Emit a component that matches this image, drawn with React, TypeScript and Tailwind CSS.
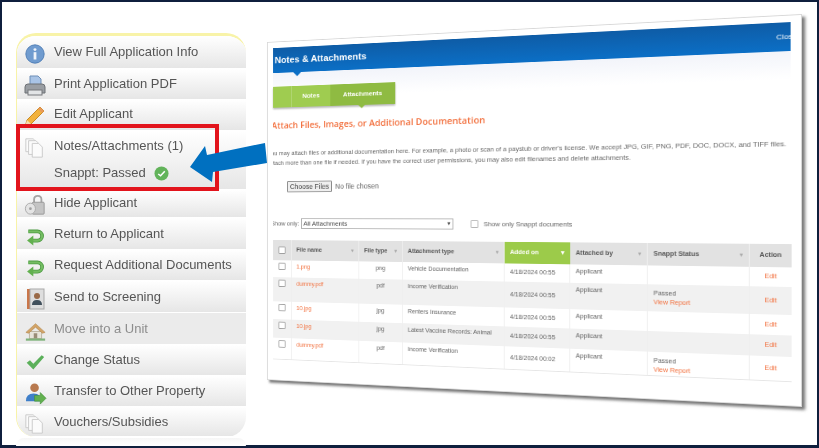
import React from "react";

const InfoIcon = () => (
  <svg viewBox="0 0 24 24" className="w-[22px] h-[22px]">
    <circle cx="12" cy="12" r="10" fill="#6f9bcf" stroke="#4f7db5" />
    <circle cx="12" cy="7.200" r="1.600" fill="#eef3fa" />
    <rect x="10.500" y="10" width="3" height="8" fill="#eef3fa" />
  </svg>
);

const PrintIcon = () => (
  <svg viewBox="0 0 24 24" className="w-[24px] h-[24px]">
    <path d="M7 2h8l3 3v7H7z" fill="#a9c4e6" stroke="#6f8fb8" />
    <path d="M2 13q0-3 3-3h14q3 0 3 3v6H2z" fill="#9a9ea3" stroke="#6d7075" />
    <rect x="5" y="16" width="14" height="5" fill="#e2e4e6" stroke="#77797c" />
  </svg>
);

const PencilIcon = () => (
  <svg viewBox="0 0 24 24" className="w-[24px] h-[24px]">
    <path d="M2 23l2-7L17 3l4 4L8 20z" fill="#f2b23c" stroke="#c98b25" />
    <path d="M2 23l2-7 4 4z" fill="#f5dcae" />
    <path d="M17 3l4 4-2 2-4-4z" fill="#e79a5b" />
  </svg>
);

const PagesIcon = () => (
  <svg viewBox="0 0 24 24" className="w-[22px] h-[22px]" fill="#fbfbfb" stroke="#c8c8c8">
    <path d="M2 2h8l2 2v12H2z" />
    <path d="M5 4h8l2 2v13H5z" />
    <path d="M9 7h7l4 4v11H9z" />
  </svg>
);

const LockIcon = () => (
  <svg viewBox="0 0 24 24" className="w-[22px] h-[22px]">
    <path d="M11 10V6q0-4 4-4t4 4v4" fill="none" stroke="#a5a5a5" strokeWidth="2" />
    <rect x="9" y="9" width="13" height="13" rx="1" fill="#c4c4c4" stroke="#979797" />
    <ellipse cx="7" cy="16" rx="5.500" ry="6" fill="#e4e4e4" stroke="#a8a8a8" />
    <circle cx="7" cy="16" r="1.500" fill="#a0a0a0" />
  </svg>
);

const ReturnIcon = () => (
  <svg viewBox="0 0 24 24" className="w-[20px] h-[20px]" fill="none">
    <path d="M4 6.500h11a5.500 5.500 0 0 1 0 11H9" stroke="#4c9a42" strokeWidth="4.500" />
    <path d="M4 6.500h11a5.500 5.500 0 0 1 0 11H9" stroke="#74bd62" strokeWidth="2.500" />
    <path d="M10 11.500v12L2.500 17.500z" fill="#62b04f" />
  </svg>
);

const BookIcon = () => (
  <svg viewBox="0 0 24 24" className="w-[24px] h-[24px]">
    <rect x="4" y="2" width="3" height="20" fill="#c9764a" />
    <rect x="7" y="2" width="14" height="20" fill="#dedede" stroke="#a9a9a9" />
    <circle cx="14" cy="9" r="3" fill="#9a6a48" />
    <path d="M9 18q0-5 5-5t5 5z" fill="#41505c" />
  </svg>
);

const HouseIcon = () => (
  <svg viewBox="0 0 24 24" className="w-[21px] h-[21px]">
    <rect x="5" y="12" width="14" height="8" fill="#e8e4da" stroke="#b9b09a" />
    <path d="M1 13L12 3l11 10-3 1-8-7-8 7z" fill="#d2a468" stroke="#b08448" strokeWidth="0.600" />
    <rect x="10" y="14" width="4" height="6" fill="#9b8d77" />
    <rect x="1" y="20" width="22" height="2.500" fill="#7fb27a" />
  </svg>
);

const CheckIcon = () => (
  <svg viewBox="0 0 24 24" className="w-[20px] h-[20px]">
    <path d="M2 13l4-3 4 4L20 4l3 2L10 21z" fill="#5bb05a" />
  </svg>
);

const TransferIcon = () => (
  <svg viewBox="0 0 24 24" className="w-[23px] h-[23px]">
    <circle cx="11" cy="6" r="4.500" fill="#b8794e" />
    <path d="M2 20q0-8 8-8t8 8z" fill="#3f7fc9" />
    <path d="M11 14h6v-3l6 6-6 6v-3h-6z" fill="#62b04f" stroke="#3f8f37" strokeWidth="0.600" />
  </svg>
);

const items = [
  { label: "View Full Application Info", icon: <InfoIcon />, row: "h-[33px]", pad: "pt-[4px]" },
  { label: "Print Application PDF", icon: <PrintIcon />, row: "h-[31px]", pad: "pt-[3px]" },
  { label: "Edit Applicant", icon: <PencilIcon />, row: "h-[31px]", pad: "pt-[2px]" },
  { label: "Notes/Attachments (1)", icon: <PagesIcon />, row: "h-[59px]", pad: "pt-[3px]", snappt: true },
  { label: "Hide Applicant", icon: <LockIcon />, row: "h-[28px]", pad: "pt-[1px]" },
  { label: "Return to Applicant", icon: <ReturnIcon />, row: "h-[32px]", pad: "pt-[4px]" },
  { label: "Request Additional Documents", icon: <ReturnIcon />, row: "h-[31px]", pad: "pt-[3px]" },
  { label: "Send to Screening", icon: <BookIcon />, row: "h-[32px]", pad: "pt-[4px]" },
  { label: "Move into a Unit", icon: <HouseIcon />, row: "h-[32px]", pad: "pt-[4px]", disabled: true },
  { label: "Change Status", icon: <CheckIcon />, row: "h-[31px]", pad: "pt-[3px]" },
  { label: "Transfer to Other Property", icon: <TransferIcon />, row: "h-[31px]", pad: "pt-[3px]" },
  { label: "Vouchers/Subsidies", icon: <PagesIcon />, row: "h-[30px]", pad: "pt-[3px]" },
];

const Sidebar = () => (
  <div className="w-[230px] ml-[16px] pt-[33px]">
    <div className="h-[404px] rounded-[20px] border-l border-t-[3px] border-[#f8f3a8] overflow-hidden bg-white blur-[0.3px]">
      {items.map((item) => (
        <div
          key={item.label}
          className={`${item.row} ${item.pad} flex pl-[4px] border-b border-white whitespace-nowrap ${
            item.disabled
              ? "bg-[#ebebeb] text-[#8d8d8d]"
              : "bg-gradient-to-b from-white to-[#e6e6e6] text-[#555555]"
          }`}
        >
          <div className="w-[28px] h-[24px] mt-[2px] shrink-0 flex items-center justify-center">{item.icon}</div>
          <div className="pl-[5px] text-[13px] leading-[24px]">
            <div>{item.label}</div>
            {item.snappt && (
              <div className="flex items-center gap-[8px] mt-[3px]">
                <span>Snappt: Passed</span>
                <svg viewBox="0 0 16 16" className="w-[15px] h-[15px]">
                  <circle cx="8" cy="8" r="7.500" fill="#62b35a" />
                  <path d="M4.500 8.500l2.500 2 4.500-5" fill="none" stroke="#fff" strokeWidth="1.600" />
                </svg>
              </div>
            )}
          </div>
        </div>
      ))}
    </div>
    {/* faint reflection under the menu */}
    <div className="h-[8px] mt-[1px] rounded-t-[20px] bg-gradient-to-b from-[#f6f6f6] to-white" />
  </div>
);

const rows = [
  { name: "1.png", type: "png", kind: "Vehicle Documentation", date: "4/18/2024 00:55", status: "", height: "h-[21px]", odd: false },
  { name: "dummy.pdf", type: "pdf", kind: "Income Verification", date: "4/18/2024 00:55", status: "Passed", height: "h-[30px]", odd: true },
  { name: "10.jpg", type: "jpg", kind: "Renters Insurance", date: "4/18/2024 00:55", status: "", height: "h-[22px]", odd: false },
  { name: "10.jpg", type: "jpg", kind: "Latest Vaccine Records: Animal", date: "4/18/2024 00:55", status: "", height: "h-[23px]", odd: true },
  { name: "dummy.pdf", type: "pdf", kind: "Income Verification", date: "4/18/2024 00:02", status: "Passed", height: "h-[26px]", odd: false },
];

const Caret = () => <span className="ml-auto text-[6px] text-[#a8a8a8]">▾</span>;

const HeadCell = ({ width, label }: { width: string; label: string }) => (
  <div className={`${width} shrink-0 flex items-center px-[6px] border-r border-[#efefef] text-[#555555] font-bold`}>
    {label}
    <Caret />
  </div>
);

const Box = () => <span className="block w-[9px] h-[9px] border border-[#9a9a9a] bg-white rounded-[1px]" />;

const AttachmentsTable = () => (
  <div className="mt-[14px] w-[582px] text-[7px] text-[#5f5f5f] border-b border-[#e6e6e6]">
    <div className="flex h-[25px] bg-[#e2e2e2]">
      <div className="w-[24px] shrink-0 flex items-center justify-center border-r border-[#efefef]">
        <Box />
      </div>
      <HeadCell width="w-[85px]" label="File name" />
      <HeadCell width="w-[53px]" label="File type" />
      <HeadCell width="w-[119px]" label="Attachment type" />
      <div className="w-[73px] shrink-0 flex items-center px-[6px] bg-[#9ccb4a] text-white font-bold">
        Added on
        <span className="ml-auto text-[7px]">▾</span>
      </div>
      <HeadCell width="w-[83px]" label="Attached by" />
      <HeadCell width="w-[104px]" label="Snappt Status" />
      <div className="w-[41px] shrink-0 flex items-center justify-center font-bold text-[#555555]">Action</div>
    </div>
    {rows.map((row, index) => (
      <div key={index} className={`${row.height} flex ${row.odd ? "bg-[#f1f1f1]" : "bg-white"}`}>
        <div className="w-[24px] shrink-0 flex justify-center pt-[3px] border-r border-[#efefef]">
          <Box />
        </div>
        <div className="w-[85px] shrink-0 px-[6px] pt-[3px] text-[#f2703e] border-r border-[#efefef]">{row.name}</div>
        <div className="w-[53px] shrink-0 pt-[3px] text-center border-r border-[#efefef]">{row.type}</div>
        <div className="w-[119px] shrink-0 px-[6px] pt-[3px] whitespace-nowrap border-r border-[#efefef]">{row.kind}</div>
        <div className="w-[73px] shrink-0 px-[6px] flex items-center border-r border-[#efefef]">{row.date}</div>
        <div className="w-[83px] shrink-0 px-[6px] pt-[3px] border-r border-[#efefef]">Applicant</div>
        <div className="w-[104px] shrink-0 px-[6px] pt-[5px] leading-[10px] border-r border-[#efefef]">
          {row.status && (
            <>
              <div>{row.status}</div>
              <div className="text-[#f2703e]">View Report</div>
            </>
          )}
        </div>
        <div className="w-[41px] shrink-0 flex items-center justify-center text-[#f2703e]">Edit</div>
      </div>
    ))}
  </div>
);

const NotesPanel = () => (
  <div className="absolute left-0 top-0 w-[600px] h-[420px] origin-top-left [transform:matrix3d(0.7046,-0.04993,0,-0.00023325,0,0.80476,0,0,0,0,1,0,267,42,0,1)] bg-white border border-[#d8d8d8] shadow-[3px_3px_3px_#777777] pl-[7px] pr-[10px] pt-[7px] blur-[0.45px] font-['Liberation_Sans',sans-serif] overflow-hidden">
    <div className="relative h-[31px] bg-gradient-to-b from-[#0e5ca6] to-[#0b6fc6] flex items-center justify-between pl-[2px] text-white">
      <span className="text-[11.5px] font-bold">Notes &amp; Attachments</span>
      <span className="text-[8px] w-[14px] overflow-hidden">Close</span>
      <span className="absolute left-[26px] top-[31px] border-x-[5px] border-t-[5px] border-x-transparent border-t-[#0b6fc6]" />
    </div>
    <div className="h-[30px] bg-gradient-to-b from-[#f2f4fa] to-white" />
    <div className="relative flex h-[26px] -mt-[13px] w-[153px] bg-[#9fcc50] text-white text-[8px] font-bold shadow-[0_2px_2px_#bbbbbb]">
      <div className="w-[24px] border-r border-[#b3d878]" />
      <div className="w-[49px] flex items-center justify-center">Notes</div>
      <div className="w-[80px] flex items-center justify-center bg-[#8fbb42]">Attachments</div>
      <span className="absolute left-[108px] top-[26px] border-x-[4px] border-t-[4px] border-x-transparent border-t-[#8fbb42]" />
    </div>
    <div className="mt-[15px] text-[10.8px] leading-[14px] text-[#f2703e] font-['Open_Sans',sans-serif] font-semibold whitespace-nowrap overflow-hidden">
      <div className="-ml-[2px]">Attach Files, Images, or Additional Documentation</div>
    </div>
    <div className="mt-[22px] text-[7.4px] leading-[12px] text-[#666666] whitespace-nowrap overflow-hidden">
      <div className="-ml-[7px]">
        You may attach files or additional documentation here. For example, a photo or scan of a paystub or driver's license. We accept JPG, GIF, PNG, PDF, DOC, DOCX, and TIFF files.
      </div>
      <div className="-ml-[7px]">
        Attach more than one file if needed. If you have the correct user permissions, you may also edit filenames and delete attachments.
      </div>
    </div>
    <div className="mt-[16px] ml-[18px] flex items-center gap-[4px] text-[8.5px] text-[#666666]">
      <span className="w-[57px] h-[14px] flex items-center justify-center bg-[#efefef] border border-[#8a8a8a] rounded-[1px] text-[#444444]">
        Choose Files
      </span>
      No file chosen
    </div>
    <div className="mt-[32px] flex items-center text-[7.5px] text-[#666666]">
      <span className="w-[36px] shrink-0 overflow-hidden whitespace-nowrap">
        <span className="block -ml-[3px]">Show only:</span>
      </span>
      <span className="w-[186px] h-[13px] shrink-0 flex items-center justify-between px-[2px] border border-[#b0b0b0] text-[8px] text-[#444444]">
        All Attachments
        <span className="text-[7px]">▾</span>
      </span>
      <span className="ml-[20px] mr-[6px] block w-[9px] h-[9px] border border-[#b5b5b5] rounded-[1px]" />
      Show only Snappt documents
    </div>
    <AttachmentsTable />
  </div>
);

const App = () => {
  return (
    <div className="relative w-[819px] h-[448px] bg-white overflow-hidden shadow-[inset_2px_2px_0_#0f1f3d,inset_-2px_-3px_0_#0f1f3d] font-['Liberation_Sans',sans-serif]">
      <Sidebar />
      <NotesPanel />
      {/* red call-out box and arrow sit over the menu */}
      <div className="absolute left-[16px] top-[124px] w-[203px] h-[67px] border-[4px] border-[#e2141c]" />
      <svg className="absolute left-0 top-0 w-[819px] h-[448px]" viewBox="0 0 819 448">
        <path d="M190 167L205 146L207 155L265 143L267 163L213 172L212 182Z" fill="#0070c0" />
      </svg>
    </div>
  );
};

export default App;
